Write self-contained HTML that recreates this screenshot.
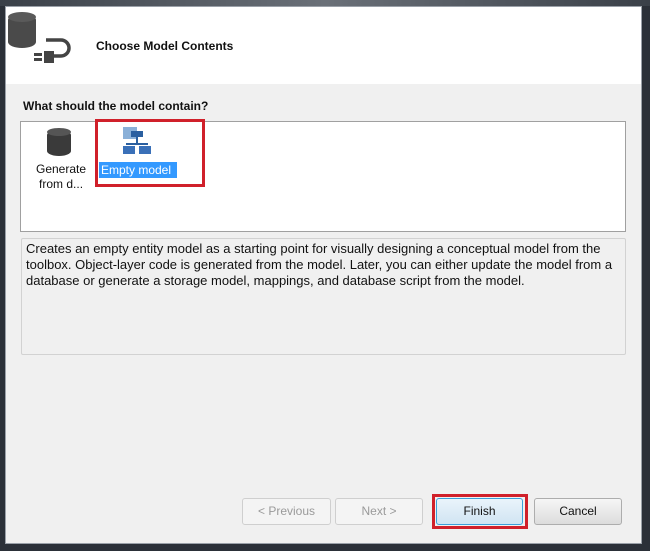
<!DOCTYPE html>
<html><head><meta charset="utf-8"><style>
*{margin:0;padding:0;box-sizing:border-box}
body{width:650px;height:551px;overflow:hidden;background:#2b3038;font-family:"Liberation Sans",sans-serif;font-size:12px;color:#111;position:relative}
.win{position:absolute;left:5px;top:6px;width:637px;height:538px;background:#f0f0f0;border:1px solid #9aa0a8}
.hdr{position:absolute;left:0;top:0;width:100%;height:77px;background:#fff}
.abs{position:absolute}
.btn{position:absolute;height:27px;border:1px solid #adadad;border-radius:3px;background:linear-gradient(#f6f6f6,#dcdcdc);text-align:center;line-height:25px;font-size:12px}
.dis{background:#f4f4f4;border-color:#cfcfcf;color:#9a9a9a}
</style></head><body>
<div class="abs" style="left:0;top:0;width:650px;height:6px;background:linear-gradient(90deg,#3a4048,#6a7078,#3a4048)"></div>
<div class="win">
 <div class="hdr"></div>
</div>
<div class="abs" style="left:8px;top:14px;width:28px;height:34px;background:#4a4a4a;border-radius:14px/6px"></div>
<div class="abs" style="left:8px;top:12px;width:28px;height:10px;background:#5a5a5a;border-radius:50%"></div>
<svg class="abs" style="left:30px;top:35px" width="44" height="32"><path d="M16 5 H31 a8 8 0 0 1 0 16 H22" fill="none" stroke="#444" stroke-width="3.5"/><rect x="14" y="16" width="10" height="12" fill="#444"/><rect x="4" y="18" width="8" height="3" fill="#444"/><rect x="4" y="23" width="8" height="3" fill="#444"/></svg>
<div class="abs" style="left:96px;top:39px;font-weight:bold;font-size:12px">Choose Model Contents</div>
<div class="abs" style="left:23px;top:99px;font-weight:bold;font-size:12px">What should the model contain?</div>
<div class="abs" style="left:20px;top:121px;width:606px;height:111px;background:#fff;border:1px solid #a0a0a0"></div>
<div class="abs" style="left:47px;top:130px;width:24px;height:26px;background:#3a3a3a;border-radius:12px/5px"></div>
<div class="abs" style="left:47px;top:128px;width:24px;height:8px;background:#555;border-radius:50%"></div>
<div class="abs" style="left:36px;top:162px;line-height:15px;text-align:center">Generate<br>from d...</div>
<div class="abs" style="left:95px;top:119px;width:110px;height:68px;border:3px solid #d0202a"></div>
<svg class="abs" style="left:121px;top:125px" width="32" height="32"><rect x="2" y="2" width="14" height="12" fill="#8ab0d8"/><rect x="10" y="6" width="12" height="6" fill="#2a5fa0"/><rect x="15" y="12" width="2" height="8" fill="#2a5fa0"/><rect x="5" y="18" width="22" height="2" fill="#2a5fa0"/><rect x="2" y="21" width="12" height="8" fill="#3a70b8"/><rect x="18" y="21" width="12" height="8" fill="#3a70b8"/></svg>
<div class="abs" style="left:99px;top:162px;width:78px;height:16px;background:#3399ff;color:#fff;line-height:16px;padding-left:2px">Empty model</div>
<div class="abs" style="left:21px;top:238px;width:605px;height:117px;border:1px solid #d2d2d2;border-radius:2px;background:#f0f0f0"></div>
<div class="abs" style="left:26px;top:241px;line-height:16px;font-size:13px;width:596px">Creates an empty entity model as a starting point for visually designing a conceptual model from the toolbox. Object-layer code is generated from the model. Later, you can either update the model from a database or generate a storage model, mappings, and database script from the model.</div>
<div class="btn dis" style="left:242px;top:498px;width:89px">&lt; Previous</div>
<div class="btn dis" style="left:335px;top:498px;width:88px">Next &gt;</div>
<div class="abs" style="left:432px;top:494px;width:96px;height:35px;border:3px solid #d0202a"></div>
<div class="btn" style="left:436px;top:498px;width:87px;border-color:#3c9fd8;background:linear-gradient(#eaf4fb,#d0e4f2)">Finish</div>
<div class="btn" style="left:534px;top:498px;width:88px">Cancel</div>
<div class="abs" style="left:0;top:544px;width:650px;height:7px;background:#2b3038"></div>
</body></html>
